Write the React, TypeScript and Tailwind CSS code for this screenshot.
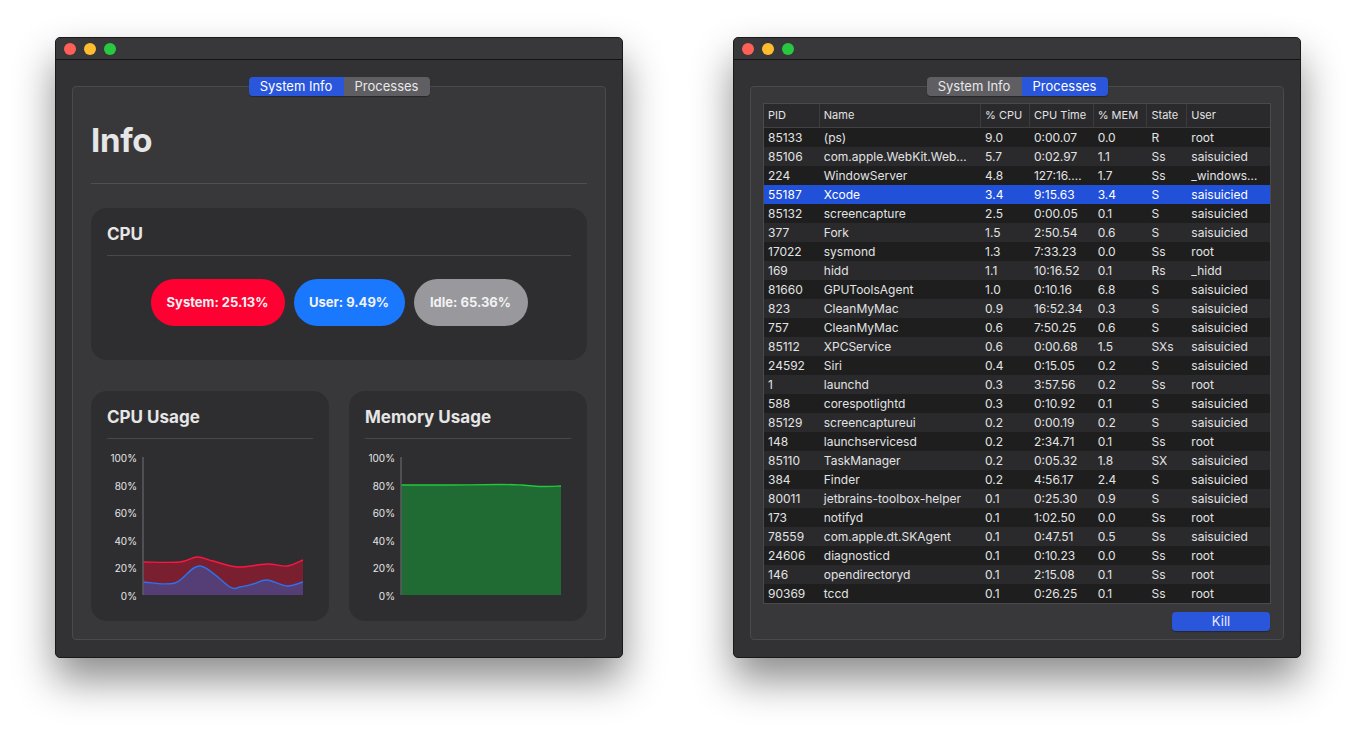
import React from "react";

type Pt = [number, number];

// catmull-rom -> cubic bezier, for the smooth chart lines
const smooth = (pts: Pt[]) => {
  let d = `M${pts[0][0]},${pts[0][1]}`;
  for (let i = 0; i < pts.length - 1; i++) {
    const p0 = pts[i - 1] || pts[i];
    const p1 = pts[i];
    const p2 = pts[i + 1];
    const p3 = pts[i + 2] || p2;
    const c1x = p1[0] + (p2[0] - p0[0]) / 6;
    const c1y = p1[1] + (p2[1] - p0[1]) / 6;
    const c2x = p2[0] - (p3[0] - p1[0]) / 6;
    const c2y = p2[1] - (p3[1] - p1[1]) / 6;
    d += ` C${c1x},${c1y} ${c2x},${c2y} ${p2[0]},${p2[1]}`;
  }
  return d;
};

const W = 160;
const H = 138;

const redPts: Pt[] = [
  [0, 105], [37, 105], [54, 100], [70, 104], [94, 110], [124, 107], [144, 109], [160, 103],
];
const bluePts: Pt[] = [
  [0, 125], [32, 126], [57, 109], [87, 130], [97, 130], [110, 127], [124, 123], [144, 129], [160, 125],
];
const memPts: Pt[] = [
  [0, 28], [50, 28], [100, 27.5], [120, 28], [140, 29.5], [160, 29],
];

const area = (pts: Pt[]) => `${smooth(pts)} L${W},${H} L0,${H} Z`;

const processes = [
  ["85133", "(ps)", "9.0", "0:00.07", "0.0", "R", "root"],
  ["85106", "com.apple.WebKit.Web…", "5.7", "0:02.97", "1.1", "Ss", "saisuicied"],
  ["224", "WindowServer", "4.8", "127:16.…", "1.7", "Ss", "_windows…"],
  ["55187", "Xcode", "3.4", "9:15.63", "3.4", "S", "saisuicied"],
  ["85132", "screencapture", "2.5", "0:00.05", "0.1", "S", "saisuicied"],
  ["377", "Fork", "1.5", "2:50.54", "0.6", "S", "saisuicied"],
  ["17022", "sysmond", "1.3", "7:33.23", "0.0", "Ss", "root"],
  ["169", "hidd", "1.1", "10:16.52", "0.1", "Rs", "_hidd"],
  ["81660", "GPUToolsAgent", "1.0", "0:10.16", "6.8", "S", "saisuicied"],
  ["823", "CleanMyMac", "0.9", "16:52.34", "0.3", "S", "saisuicied"],
  ["757", "CleanMyMac", "0.6", "7:50.25", "0.6", "S", "saisuicied"],
  ["85112", "XPCService", "0.6", "0:00.68", "1.5", "SXs", "saisuicied"],
  ["24592", "Siri", "0.4", "0:15.05", "0.2", "S", "saisuicied"],
  ["1", "launchd", "0.3", "3:57.56", "0.2", "Ss", "root"],
  ["588", "corespotlightd", "0.3", "0:10.92", "0.1", "S", "saisuicied"],
  ["85129", "screencaptureui", "0.2", "0:00.19", "0.2", "S", "saisuicied"],
  ["148", "launchservicesd", "0.2", "2:34.71", "0.1", "Ss", "root"],
  ["85110", "TaskManager", "0.2", "0:05.32", "1.8", "SX", "saisuicied"],
  ["384", "Finder", "0.2", "4:56.17", "2.4", "S", "saisuicied"],
  ["80011", "jetbrains-toolbox-helper", "0.1", "0:25.30", "0.9", "S", "saisuicied"],
  ["173", "notifyd", "0.1", "1:02.50", "0.0", "Ss", "root"],
  ["78559", "com.apple.dt.SKAgent", "0.1", "0:47.51", "0.5", "Ss", "saisuicied"],
  ["24606", "diagnosticd", "0.1", "0:10.23", "0.0", "Ss", "root"],
  ["146", "opendirectoryd", "0.1", "2:15.08", "0.1", "Ss", "root"],
  ["90369", "tccd", "0.1", "0:26.25", "0.1", "Ss", "root"],
];

const columns = [
  { name: "PID", w: "w-[56px]" },
  { name: "Name", w: "w-[162px]" },
  { name: "% CPU", w: "w-[49px]" },
  { name: "CPU Time", w: "w-[64px]" },
  { name: "% MEM", w: "w-[54px]" },
  { name: "State", w: "w-[40px]" },
  { name: "User", w: "w-[83px]" },
];

const Window = ({ children }: { children: React.ReactNode }) => (
  <div className="w-[568px] h-[621px] flex flex-col rounded-[5px] bg-[#323234] border border-[#1a1a1a] shadow-[0_22px_40px_rgba(0,0,0,0.45)] overflow-hidden">
    <div className="h-[22px] flex items-center gap-[8px] pl-[8px] bg-[#38383a] border-b border-[#141414] shrink-0">
      <span className="w-[12px] h-[12px] rounded-full bg-[#fe5f57]" />
      <span className="w-[12px] h-[12px] rounded-full bg-[#febc2e]" />
      <span className="w-[12px] h-[12px] rounded-full bg-[#28c840]" />
    </div>
    <div className="flex-1 flex flex-col px-[16px] pt-[17px] pb-[17px]">{children}</div>
  </div>
);

const Segmented = ({ active }: { active: 0 | 1 }) => (
  <div className="relative z-10 self-center flex h-[19px] rounded-[4px] overflow-hidden text-[13px] text-[#e8e8e8] shadow-[0_1px_1px_rgba(0,0,0,0.3)]">
    <div className={`w-[95px] flex items-center justify-center ${active === 0 ? "bg-[#2a56db] text-white" : "bg-[#5f5f63]"}`}>
      System Info
    </div>
    <div className={`w-[86px] flex items-center justify-center ${active === 1 ? "bg-[#2a56db] text-white" : "bg-[#5f5f63]"}`}>
      Processes
    </div>
  </div>
);

const Chart = ({ kind }: { kind: "cpu" | "mem" }) => (
  <div className="flex mt-[17px] ml-[1px]">
    <div className="w-[34px] h-[148px] flex flex-col justify-between items-end pr-[5px] text-[10px] leading-[10px] text-[#e6e6e6] -mt-[3px]">
      {["100%", "80%", "60%", "40%", "20%", "0%"].map((l) => (
        <span key={l}>{l}</span>
      ))}
    </div>
    <svg width={W + 2} height={H + 2} viewBox={`-1 -1 ${W + 2} ${H + 2}`}>
      {kind === "cpu" ? (
        <>
          <path d={area(redPts)} fill="#7a1f2f" />
          <path d={area(bluePts)} fill="#553d75" />
          <path d={smooth(redPts)} fill="none" stroke="#ff1443" strokeWidth="1.4" />
          <path d={smooth(bluePts)} fill="none" stroke="#2b73f0" strokeWidth="1.4" />
        </>
      ) : (
        <>
          <path d={area(memPts)} fill="#206b33" />
          <path d={smooth(memPts)} fill="none" stroke="#22c73b" strokeWidth="1.4" />
        </>
      )}
      <line x1="0" y1="0" x2="0" y2={H} stroke="#5c5c60" strokeWidth="1.5" />
    </svg>
  </div>
);

const UsageCard = ({ title, kind }: { title: string; kind: "cpu" | "mem" }) => (
  <div className="w-[238px] h-[230px] rounded-[16px] bg-[#2e2e30] px-[16px] pt-[15px]">
    <div className="text-[17px] leading-[22px] font-bold text-[#e6e6e6]">{title}</div>
    <div className="mt-[10px] h-px bg-[#48484b]" />
    <Chart kind={kind} />
  </div>
);

const SystemInfo = () => (
  <Window>
    <Segmented active={0} />
    <div className="-mt-[10px] flex-1 rounded-[4px] bg-[#38383a] border border-[#4a4a4d] px-[18px] pt-[33px]">
      <div className="text-[33px] leading-[40px] font-bold text-[#e6e6e6] tracking-[-0.3px]">Info</div>
      <div className="mt-[23px] h-px bg-[#505053]" />
      <div className="mt-[24px] h-[152px] rounded-[16px] bg-[#2e2e30] px-[16px] pt-[15px]">
        <div className="text-[17px] leading-[22px] font-bold text-[#e6e6e6]">CPU</div>
        <div className="mt-[10px] h-px bg-[#48484b]" />
        <div className="mt-[23px] flex justify-center gap-[9px] text-[13px] font-bold text-[#f2f2f2]">
          <div className="w-[134px] h-[47px] rounded-full bg-[#ff0033] flex items-center justify-center">System: 25.13%</div>
          <div className="w-[111px] h-[47px] rounded-full bg-[#1a78ff] flex items-center justify-center">User: 9.49%</div>
          <div className="w-[114px] h-[47px] rounded-full bg-[#98989d] flex items-center justify-center">Idle: 65.36%</div>
        </div>
      </div>
      <div className="mt-[31px] flex gap-[20px]">
        <UsageCard title="CPU Usage" kind="cpu" />
        <UsageCard title="Memory Usage" kind="mem" />
      </div>
    </div>
  </Window>
);

const Processes = () => (
  <Window>
    <Segmented active={1} />
    <div className="-mt-[10px] flex-1 flex flex-col rounded-[4px] bg-[#38383a] border border-[#4a4a4d] px-[12px] pt-[16px] pb-[8px]">
      <div className="w-[508px] border border-[#4a4a4d] bg-[#1e1e1f] text-[12px] text-[#e3e3e3]">
        <div className="flex h-[24px] bg-[#2a2a2c] border-b border-[#414144] text-[11px]">
          {columns.map((c, i) => (
            <div key={c.name} className={`${c.w} h-full flex items-center px-[4px] ${i < columns.length - 1 ? "border-r border-[#3c3c3f]" : ""}`}>
              {c.name}
            </div>
          ))}
        </div>
        {processes.map((row, r) => (
          <div
            key={row[0]}
            className={`flex h-[19px] ${row[1] === "Xcode" ? "bg-[#2150d9] text-white" : r % 2 === 0 ? "bg-[#1e1e1f]" : "bg-[#2a2a2c]"}`}
          >
            {row.map((cell, i) => (
              <div key={i} className={`${columns[i].w} flex items-center px-[4px] whitespace-nowrap overflow-hidden`}>
                {cell}
              </div>
            ))}
          </div>
        ))}
      </div>
      <div className="mt-[8px] flex justify-end pr-[1px]">
        <div className="w-[98px] h-[19px] rounded-[4px] bg-[#2a56db] text-[13px] text-[#e8ecff] flex items-center justify-center shadow-[0_1px_1px_rgba(0,0,0,0.3)]">
          Kill
        </div>
      </div>
    </div>
  </Window>
);

export default function App() {
  return (
    <div
      className="w-[1356px] h-[731px] bg-white flex gap-[110px] pl-[55px] pt-[37px]"
      style={{ fontFamily: "Inter, 'Noto Sans', sans-serif" }}
    >
      <SystemInfo />
      <Processes />
    </div>
  );
}
